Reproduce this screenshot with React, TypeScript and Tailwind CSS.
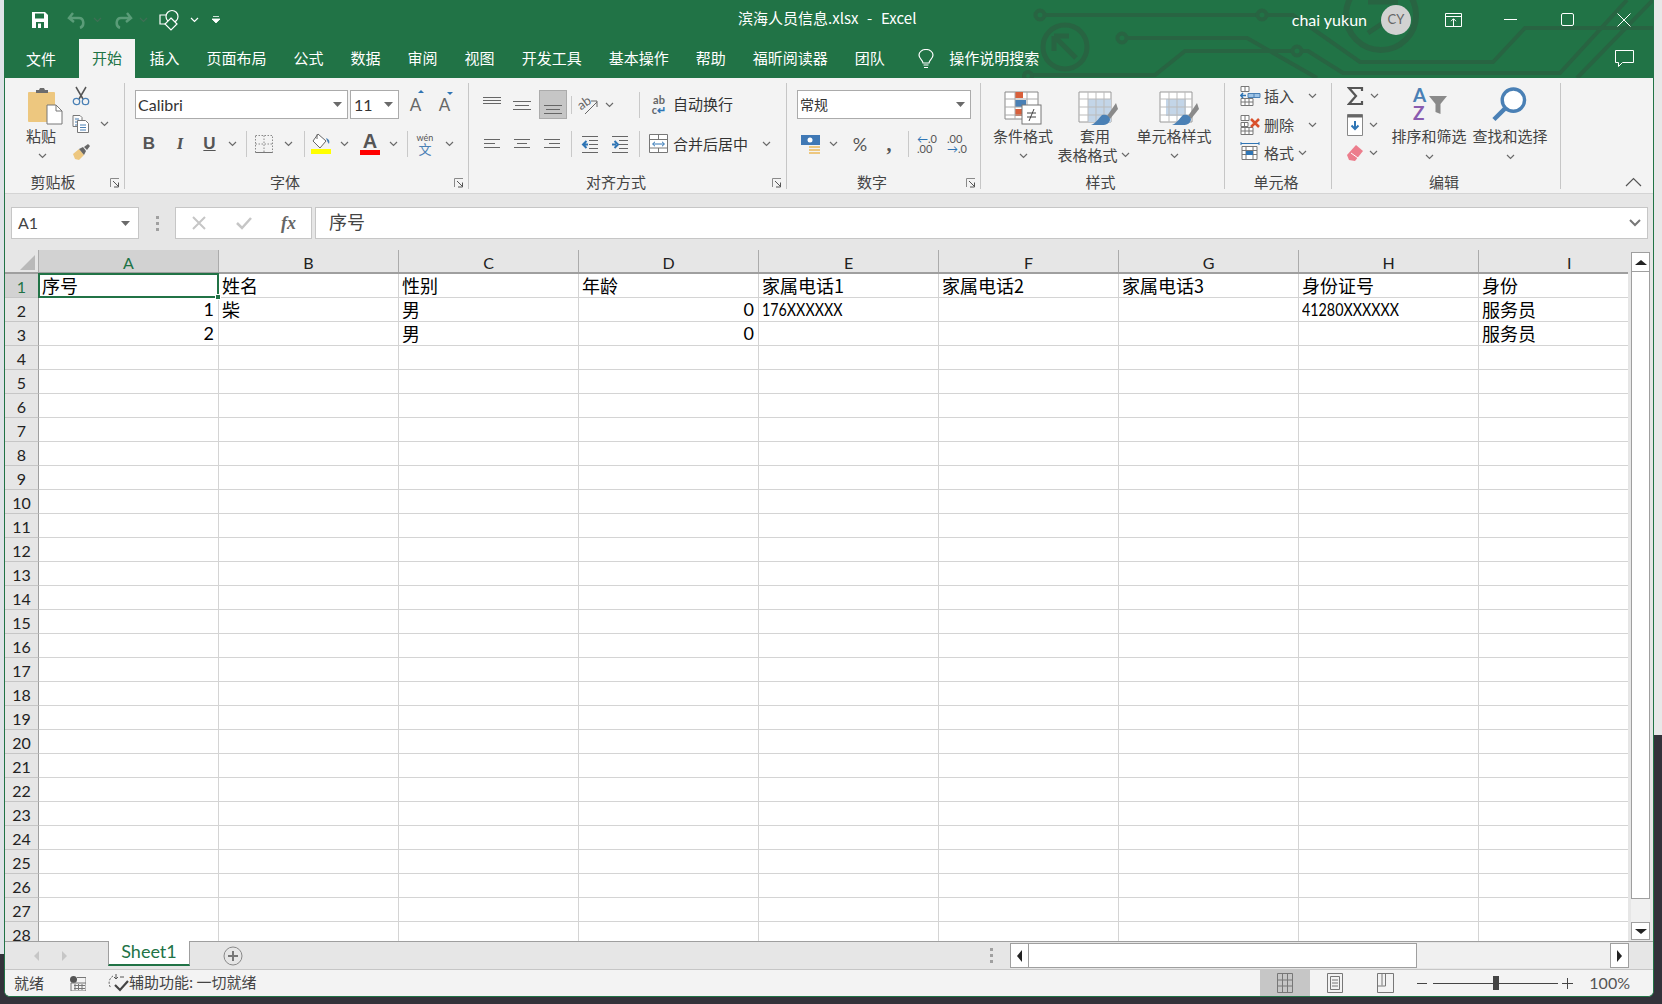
import type { ReactNode } from 'react';

const cjk = "font-['Microsoft_YaHei','Noto_Sans_CJK_SC',sans-serif]";

const Chevron = ({ className = '' }: { className?: string }) => (
  <svg width="9" height="6" viewBox="0 0 9 6" className={className}>
    <path d="M1 1l3.5 3.5L8 1" fill="none" stroke="#6a6a6a" strokeWidth="1.2" />
  </svg>
);

const Caret = () => (
  <svg width="9" height="5" viewBox="0 0 9 5">
    <path d="M0 0h9L4.5 5z" fill="#6a6a6a" />
  </svg>
);

const Launcher = () => (
  <svg width="10" height="10" viewBox="0 0 10 10">
    <path d="M.5 9V.5H9" fill="none" stroke="#8a8a8a" />
    <path d="M3 3l5 5M8.500 4.500v4.500H4" fill="none" stroke="#555" />
  </svg>
);

const Sep = ({ h = 'h-[26px]' }: { h?: string }) => <div className={`w-px bg-[#c9c9c9] ${h}`} />;

const Cell = ({ w, children, className = '' }: { w: number; children?: ReactNode; className?: string }) => (
  <div className={`flex items-center justify-center shrink-0 ${className}`} style={{ width: w }}>
    {children}
  </div>
);

const Lines = ({ ys, x1s, x2s }: { ys: number[]; x1s: number[]; x2s: number[] }) => (
  <svg width="20" height="20" viewBox="0 0 20 20">
    {ys.map((y, i) => (
      <path key={y} d={`M${x1s[i]} ${y + 0.5}H${x2s[i]}`} stroke="#666" />
    ))}
  </svg>
);

const Group = ({
  w,
  label,
  launcher,
  children,
}: {
  w: number;
  label: string;
  launcher?: boolean;
  children: ReactNode;
}) => (
  <div className="relative flex flex-col shrink-0 h-[106px] mt-[5px] border-r border-[#c6c6c6]" style={{ width: w }}>
    <div className="flex-1 min-h-0">{children}</div>
    <div className={`h-[17px] leading-[20px] text-center text-[15px] text-[#444] ${launcher ? 'pr-[23px]' : 'pr-[4px]'}`}>
      {label}
    </div>
    {launcher && (
      <div className="absolute right-[4px] bottom-[1px] flex">
        <Launcher />
      </div>
    )}
  </div>
);

const tabs = ['插入', '页面布局', '公式', '数据', '审阅', '视图', '开发工具', '基本操作', '帮助', '福昕阅读器', '团队'];

const PasteIcon = () => (
  <svg width="36" height="38" viewBox="0 0 36 38">
    <rect x="1" y="5" width="27" height="30" rx="1" fill="#edc77f" />
    <path d="M9 6V3h3l1-2h4l1 2h3v3z" fill="#6c6c6c" />
    <path d="M20 18h9l6 6v13H20z" fill="#fff" stroke="#777" />
    <path d="M29 18v6h6" fill="none" stroke="#777" />
  </svg>
);

const CutIcon = () => (
  <svg width="18" height="20" viewBox="0 0 18 20">
    <path d="M4 1l7 12M14 1L7 13" stroke="#555" strokeWidth="1.5" fill="none" />
    <circle cx="4.500" cy="15.500" r="3.200" fill="none" stroke="#4a80b5" strokeWidth="1.300" />
    <circle cx="13.500" cy="15.500" r="3.200" fill="none" stroke="#4a80b5" strokeWidth="1.300" />
  </svg>
);

const CopyIcon = () => (
  <svg width="18" height="18" viewBox="0 0 18 18">
    <path d="M1 .5h7l2 2v3M1 .5v11h4" fill="#fff" stroke="#777" />
    <path d="M5.500 5.500h8l3 3v9h-11z" fill="#fff" stroke="#777" />
    <path d="M3 4h4M3 7h2M3 10h2M8 10h6M8 12.500h6M8 15h6" stroke="#4a80b5" />
  </svg>
);

const PainterIcon = () => (
  <svg width="19" height="17" viewBox="0 0 19 17">
    <path d="M1 10l6-5 5 6-5 5-4-1z" fill="#edc77f" />
    <path d="M7 5l4-2 3 4-2 4z" fill="#666" />
    <path d="M12 3l4-3 2 2-3 4z" fill="#666" />
  </svg>
);

const BordersIcon = () => (
  <svg width="18" height="18" viewBox="0 0 18 18">
    <path d="M.5.500h17v17H.5zM9 .500v17M.5 9h17" fill="none" stroke="#8a8a8a" strokeDasharray="1.500 1.500" />
    <path d="M.5 17.500h17" stroke="#777" />
  </svg>
);

const FillIcon = () => (
  <svg width="22" height="22" viewBox="0 0 22 22">
    <path d="M8 1l8 7-6 7-7-7z" fill="#fff" stroke="#666" />
    <path d="M7 1.500V6" stroke="#666" />
    <path d="M16 5c3 1 4 3 3 6-1-1-2-3-3-6z" fill="#4a80b5" />
    <rect x="1" y="16" width="20" height="5" fill="#ffff00" />
  </svg>
);

const FontColorIcon = () => (
  <div className="flex flex-col items-center w-[20px]">
    <span className="text-[20px] leading-[17px] font-bold text-[#555] font-['Liberation_Sans']">A</span>
    <div className="w-[20px] h-[5px] bg-[#ff0000]" />
  </div>
);

const WenIcon = () => (
  <div className="flex flex-col items-center leading-none w-[18px]">
    <span className="text-[9px] text-[#555] font-['Lato'] leading-[9px]">wén</span>
    <span className="text-[13px] text-[#4a80b5] leading-[13px]">文</span>
  </div>
);

const IndentIcon = ({ right }: { right?: boolean }) => (
  <svg width="18" height="18" viewBox="0 0 18 18">
    <path d="M1 1.500h16M8 5.500h9M8 9.500h9M8 13.500h9M1 17.500h16" stroke="#666" />
    {right ? (
      <path d="M1 9.500h4M3.500 6l3.500 3.500-3.500 3.500" stroke="#2f75b5" strokeWidth="2" fill="none" />
    ) : (
      <path d="M7 9.500H2.500M5.500 6L2 9.500 5.500 13" stroke="#2f75b5" strokeWidth="2" fill="none" />
    )}
  </svg>
);

const CondIcon = () => (
  <svg width="38" height="34" viewBox="0 0 38 34">
    <path d="M1 1h33v27H1z" fill="#fff" stroke="#888" />
    <rect x="11" y="1" width="8" height="6" fill="#d9603b" />
    <rect x="11" y="9" width="11" height="7" fill="#4a80b5" />
    <rect x="11" y="18" width="9" height="7" fill="#d9603b" />
    <path d="M1 8h33M1 16h33M1 24h18M11 1v27M23 1v27" fill="none" stroke="#aaa" />
    <rect x="18" y="14" width="19" height="19" fill="#fff" stroke="#777" />
    <path d="M23 22h9M23 26h9M30 18l-5 12" stroke="#444" fill="none" />
  </svg>
);

const TableIcon = ({ full }: { full?: boolean }) => (
  <svg width="40" height="36" viewBox="0 0 40 36">
    <path d="M1 1h32v30H1z" fill="#fff" stroke="#999" />
    {full ? (
      <rect x="7" y="8" width="20" height="17" fill="#c3d5e8" />
    ) : (
      <rect x="10" y="8" width="23" height="23" fill="#c3d5e8" />
    )}
    <path d="M1 8h32M1 16h32M1 24h32M10 1v30M18 1v30M26 1v30" fill="none" stroke="#bbb" />
    <path d="M38 12l-9 13 3 3 8-10z" fill="#8a8a8a" />
    <path d="M24 24c4-1 8 1 8 5-1 3-3 5-8 5H13c5-2 7-6 11-10z" fill="#4a80b5" />
  </svg>
);

const CellsIcon = ({ kind }: { kind: 'ins' | 'del' | 'fmt' }) => (
  <svg width="22" height="22" viewBox="0 0 22 22">
    {kind === 'fmt' ? (
      <g>
        <path d="M1 1.500h18M1 0v3M19 0v3" stroke="#2f75b5" />
        <path d="M2 4.500h15v13H2zM2 8.500h15M2 12.500h15M6 4.500v13M13 4.500v13" fill="#fff" stroke="#777" />
        <rect x="6" y="9" width="7" height="4" fill="#2f75b5" />
      </g>
    ) : (
      <g>
        <path d="M1 1.500h8v5H1zM5 1.500v5M1 13.500h12v7H1zM1 17h12M5 13.500v7M9 13.500v7" fill="#fff" stroke="#777" />
        {kind === 'ins' ? (
          <g>
            <path d="M8 8.500h12v4H8zM14 8.500v4" fill="#9dc3e6" stroke="#4a80b5" />
            <path d="M6 10.500H1M3 8L.8 10.500 3 13" stroke="#2f75b5" strokeWidth="1.500" fill="none" />
          </g>
        ) : (
          <g>
            <path d="M1 8.500h7v4H1zM4.500 8.500v4" fill="#fff" stroke="#777" />
            <path d="M11 5l8 8M19 5l-8 8" stroke="#d9512c" strokeWidth="2.500" />
          </g>
        )}
      </g>
    )}
  </svg>
);

const FunnelIcon = () => (
  <svg width="18" height="18" viewBox="0 0 18 18">
    <path d="M0 0h18l-6.500 8v10l-5-2V8z" fill="#8a8a8a" />
  </svg>
);

const FindIcon = () => (
  <svg width="35" height="36" viewBox="0 0 36 36">
    <circle cx="22" cy="14" r="11.500" fill="#fff" stroke="#4a80b5" strokeWidth="3.500" />
    <path d="M13 23L2 34" stroke="#4a80b5" strokeWidth="4.500" />
  </svg>
);

const headers = ['A', 'B', 'C', 'D', 'E', 'F', 'G', 'H', 'I'];

const rowsData: Record<number, { text: string; right?: boolean; en?: boolean }[]> = {
  1: [
    { text: '序号' },
    { text: '姓名' },
    { text: '性别' },
    { text: '年龄' },
    { text: '家属电话1' },
    { text: '家属电话2' },
    { text: '家属电话3' },
    { text: '身份证号' },
    { text: '身份' },
  ],
  2: [
    { text: '1', right: true },
    { text: '柴' },
    { text: '男' },
    { text: '0', right: true },
    { text: '176XXXXXX', en: true },
    { text: '' },
    { text: '' },
    { text: '41280XXXXXX', en: true },
    { text: '服务员' },
  ],
  3: [
    { text: '2', right: true },
    { text: '' },
    { text: '男' },
    { text: '0', right: true },
    { text: '' },
    { text: '' },
    { text: '' },
    { text: '' },
    { text: '服务员' },
  ],
};

const rowNums = Array.from({ length: 28 }, (_, i) => i + 1);

const Circuit = () => (
  <svg
    className="absolute left-0 top-0 pointer-events-none"
    width="1650"
    height="78"
    viewBox="5 0 1650 78"
    fill="none"
    stroke="#286442"
    strokeWidth="4"
  >
    <circle cx="1040" cy="15" r="4.500" />
    <path d="M1045 15h212" />
    <circle cx="1262" cy="15" r="4.500" />
    <path d="M1267 15h26l67 47h133l32-34h130" />
    <circle cx="1122" cy="38" r="4.500" />
    <path d="M1127 38h120l70 40" />
    <path d="M1030 75h125l30-24h107" />
    <circle cx="1297" cy="51" r="4.500" />
    <path d="M1302 51h6l35 22h217l67-73" />
    <path d="M1577 78l76-78" />
    <circle cx="1065" cy="47" r="22" strokeWidth="5" />
    <path d="M1054 36h15M1054 36v15M1056 38l20 20" strokeWidth="5" />
    <circle cx="1381" cy="15" r="35" strokeWidth="6" />
    <path d="M1368 2h30M1395 15l-27 18" strokeWidth="5" />
    <circle cx="1028" cy="76" r="4" />
  </svg>
);

export default function App() {
  return (
    <div className={`relative w-[1662px] h-[1004px] overflow-hidden bg-[#33323a] flex ${cjk} text-[#333]`}>
      {/* desktop showing at the edges */}
      <div className="w-[4px] h-[954px] bg-[#dfe3e8] shrink-0" />
      <div className="w-[1650px] h-[997px] shrink-0 flex flex-col bg-[#f3f3f3] border-x border-b border-[#217346] rounded-bl-[6px] rounded-br-[6px] overflow-hidden">
        {/* title + tabs */}
        <div className="relative h-[78px] shrink-0 bg-[#217346] text-white">
          <Circuit />
          <div className="relative h-[39px] flex items-center">
            <div className="ml-[25px] flex items-center">
              <Cell w={20}>
                <svg width="16" height="16" viewBox="0 0 16 16">
                  <path d="M0 0h13l3 3v13H0z" fill="#fff" />
                  <path d="M3 1.500h9v5H3z" fill="#217346" />
                  <path d="M4 10h8v6H4z" fill="#217346" />
                  <path d="M6 11.500h3V16H6z" fill="#fff" />
                </svg>
              </Cell>
              <Cell w={23} className="ml-[15px]">
                <svg width="20" height="18" viewBox="0 0 20 18">
                  <path d="M6 2L2 7l5 4M2 7h10c5 0 6 8 1 10" fill="none" stroke="#5a9c78" strokeWidth="2.500" />
                </svg>
              </Cell>
              <Cell w={12} className="ml-[3px]">
                <Chevron className="opacity-40" />
              </Cell>
              <Cell w={23} className="ml-[8px]">
                <svg width="20" height="18" viewBox="0 0 20 18">
                  <path d="M14 2l4 5-5 4M18 7H8c-5 0-6 8-1 10" fill="none" stroke="#5a9c78" strokeWidth="2.500" />
                </svg>
              </Cell>
              <Cell w={12} className="ml-[3px]">
                <Chevron className="opacity-40" />
              </Cell>
              <Cell w={24} className="ml-[9px]">
                <svg width="22" height="22" viewBox="0 0 22 22">
                  <path d="M1 6h10v9H1z" fill="none" stroke="#fff" strokeWidth="1.200" />
                  <circle cx="13" cy="7.500" r="6" fill="#217346" stroke="#fff" strokeWidth="1.200" />
                  <path d="M12 9l6 6-6 6-6-6z" fill="#217346" stroke="#fff" strokeWidth="1.200" />
                </svg>
              </Cell>
              <Cell w={12} className="ml-[6px]">
                <svg width="9" height="6" viewBox="0 0 9 6">
                  <path d="M1 1l3.500 3.500L8 1" fill="none" stroke="#fff" strokeWidth="1.200" />
                </svg>
              </Cell>
              <Cell w={10} className="ml-[11px]">
                <svg width="8" height="8" viewBox="0 0 8 8">
                  <path d="M1 .5h6M0 3h8L4 7z" fill="#fff" stroke="#fff" strokeWidth=".8" />
                </svg>
              </Cell>
            </div>
            <div className="absolute left-[733px] top-[8px] text-[15px] leading-[20px] whitespace-pre [word-spacing:1px]">
              滨海人员信息.xlsx  -  Excel
            </div>
            <div className="ml-auto flex items-center mr-[22px]">
              <span className="font-['Lato'] text-[16px] mr-[14px]">chai yukun</span>
              <div className="w-[30px] h-[30px] rounded-full bg-[#d2d2d2] text-[#666] flex items-center justify-center text-[13px] font-['Lato']">
                CY
              </div>
              <Cell w={22} className="ml-[31px]">
                <svg width="17" height="14" viewBox="0 0 17 14">
                  <path d="M.5.5h16v13H.5zM.5 3.500h16M8.500 13V6M6 8.200l2.500-2.500L11 8.200" fill="none" stroke="#fff" />
                </svg>
              </Cell>
              <Cell w={14} className="ml-[39px]">
                <div className="w-[13px] h-px bg-white" />
              </Cell>
              <Cell w={14} className="ml-[43px]">
                <div className="w-[13px] h-[13px] rounded-[2px] border border-white" />
              </Cell>
              <Cell w={14} className="ml-[43px]">
                <svg width="14" height="14" viewBox="0 0 14 14">
                  <path d="M.5.5l13 13M13.500.5l-13 13" stroke="#fff" />
                </svg>
              </Cell>
            </div>
          </div>
          <div className="relative h-[39px] flex items-stretch text-[15px] pl-[7px]">
            <div className="px-[14px] flex items-center mr-[9px] mt-px">文件</div>
            <div className="px-[13px] flex items-center bg-[#f3f3f3] text-[#217346] mr-px">开始</div>
            {tabs.map((t) => (
              <div key={t} className="px-[13.500px] flex items-center">
                {t}
              </div>
            ))}
            <div className="flex items-center ml-[20px]">
              <svg width="16" height="20" viewBox="0 0 16 20">
                <path
                  d="M5 14c0-3-4-4-4-8a7 5.500 0 0114 0c0 4-4 5-4 8zM5.500 16h5M6 18.500h4"
                  fill="none"
                  stroke="#fff"
                  strokeWidth="1.200"
                />
              </svg>
              <span className="ml-[15px]">操作说明搜索</span>
            </div>
            <div className="ml-auto mr-[19px] flex items-center">
              <svg width="19" height="18" viewBox="0 0 19 18">
                <path d="M.5.5h18v12H7.500l-4 4v-4h-3z" fill="none" stroke="#fff" />
              </svg>
            </div>
          </div>
        </div>

        {/* ribbon */}
        <div className="relative h-[116px] shrink-0 flex items-start bg-[#f3f3f3] border-b border-[#d4d4d4] text-[15px] text-[#444]">
          <Group w={120} label="剪贴板" launcher>
            <div className="flex">
              <div className="w-[67px] pl-[22px] pt-[4px] flex flex-col items-start">
                <PasteIcon />
                <span className="leading-[22px] w-[28px] whitespace-nowrap flex justify-center">粘贴</span>
                <Chevron className="mt-[6px] ml-[11px]" />
              </div>
              <div className="flex flex-col pt-[3px]">
                <div className="h-[23px]">
                  <CutIcon />
                </div>
                <div className="h-[30px] flex items-center">
                  <CopyIcon />
                  <Chevron className="ml-[10px]" />
                </div>
                <div className="h-[26px] flex items-center">
                  <PainterIcon />
                </div>
              </div>
            </div>
          </Group>
          <Group w={344} label="字体" launcher>
            <div className="pl-[10px] pt-[7px] flex items-center">
              <div className="w-[213px] h-[29px] bg-white border border-[#ababab] flex items-center pl-[2px] pr-[5px] text-[16px] text-[#333] font-['Lato'] justify-between">
                Calibri
                <Caret />
              </div>
              <div className="ml-[2px] w-[49px] h-[29px] bg-white border border-[#ababab] flex items-center pl-[3px] pr-[5px] text-[16px] text-[#333] font-['Lato'] justify-between">
                11
                <Caret />
              </div>
              <Cell w={29} className="ml-[2px] font-['Lato'] text-[17px] text-[#666]">
                <span className="relative">
                  A
                  <span className="absolute -right-[3px] -top-[2px] border-x-[3px] border-x-transparent border-b-[3px] border-b-[#2f75b5]" />
                </span>
              </Cell>
              <Cell w={29} className="font-['Lato'] text-[17px] text-[#666]">
                <span className="relative">
                  A
                  <span className="absolute -right-[3px] top-0 border-x-[3px] border-x-transparent border-t-[3px] border-t-[#2f75b5]" />
                </span>
              </Cell>
            </div>
            <div className="pl-[9px] mt-[12px] flex items-center h-[26px] font-['Liberation_Sans'] text-[#555] text-[17px]">
              <Cell w={30} className="font-bold">
                B
              </Cell>
              <Cell w={32} className="italic font-serif font-bold">
                I
              </Cell>
              <Cell w={27} className="underline font-bold">
                U
              </Cell>
              <Cell w={18}>
                <Chevron />
              </Cell>
              <Cell w={10}>
                <Sep />
              </Cell>
              <Cell w={26}>
                <BordersIcon />
              </Cell>
              <Cell w={22}>
                <Chevron />
              </Cell>
              <Cell w={10}>
                <Sep />
              </Cell>
              <Cell w={24}>
                <FillIcon />
              </Cell>
              <Cell w={22}>
                <Chevron />
              </Cell>
              <Cell w={30}>
                <FontColorIcon />
              </Cell>
              <Cell w={16}>
                <Chevron />
              </Cell>
              <Cell w={12}>
                <Sep />
              </Cell>
              <Cell w={24} className={`${cjk}`}>
                <WenIcon />
              </Cell>
              <Cell w={24}>
                <Chevron />
              </Cell>
            </div>
          </Group>
          <Group w={318} label="对齐方式" launcher>
            <div className="pl-[8px] pt-[7px] flex items-center h-[36px]">
              <Cell w={30}>
                <Lines ys={[2, 5, 8]} x1s={[1, 1, 1]} x2s={[19, 19, 19]} />
              </Cell>
              <Cell w={30}>
                <Lines ys={[6, 10, 14]} x1s={[1, 3, 1]} x2s={[19, 17, 19]} />
              </Cell>
              <Cell w={28} className="ml-[2px] h-[29px] bg-[#c6c6c6] border border-[#ababab]">
                <Lines ys={[10, 14, 18]} x1s={[1, 3, 1]} x2s={[19, 17, 19]} />
              </Cell>
              <Cell w={8}>
                <Sep h="h-[18px]" />
              </Cell>
              <Cell w={26}>
                <svg width="22" height="22" viewBox="0 0 22 22" className="overflow-visible">
                  <text x="1" y="13" transform="rotate(-35 8 10)" fontSize="13" fill="#666" fontFamily="Lato">
                    ab
                  </text>
                  <path d="M8 20L20 8M14 7h6v6" fill="none" stroke="#666" />
                </svg>
              </Cell>
              <Cell w={16}>
                <Chevron />
              </Cell>
              <Cell w={8} className="ml-[18px]">
                <Sep />
              </Cell>
              <Cell w={22} className="ml-[5px] font-['Lato'] text-[11px] font-bold leading-[10px] text-[#666]">
                <span className="text-center">
                  ab
                  <br />c<span className="text-[#2f75b5]">↵</span>
                </span>
              </Cell>
              <span className="ml-[3px] text-[#333]">自动换行</span>
            </div>
            <div className="pl-[8px] mt-[12px] flex items-center h-[26px]">
              <Cell w={30}>
                <Lines ys={[5, 9, 13]} x1s={[2, 2, 2]} x2s={[18, 13, 18]} />
              </Cell>
              <Cell w={30}>
                <Lines ys={[5, 9, 13]} x1s={[2, 5, 2]} x2s={[18, 15, 18]} />
              </Cell>
              <Cell w={30}>
                <Lines ys={[5, 9, 13]} x1s={[2, 7, 2]} x2s={[18, 18, 18]} />
              </Cell>
              <Cell w={8}>
                <Sep />
              </Cell>
              <Cell w={30}>
                <IndentIcon />
              </Cell>
              <Cell w={30}>
                <IndentIcon right />
              </Cell>
              <Cell w={8}>
                <Sep />
              </Cell>
              <Cell w={20} className="ml-[6px]">
                <svg width="20" height="20" viewBox="0 0 20 20">
                  <path d="M.5.500h18v18H.5zM.5 5.500h18M.5 14h18M9.500.5v5M9.500 14v4" fill="#fff" stroke="#777" />
                  <path d="M4 10h11M6 7.800L3.500 10 6 12.200M13 7.800l2.500 2.200-2.500 2.200" fill="none" stroke="#2f75b5" />
                </svg>
              </Cell>
              <span className="ml-[4px] text-[#333]">合并后居中</span>
              <Chevron className="ml-[14px]" />
            </div>
          </Group>
          <Group w={194} label="数字" launcher>
            <div className="pl-[10px] pt-[7px]">
              <div className="w-[174px] h-[29px] bg-white border border-[#ababab] flex items-center pl-[2px] pr-[5px] justify-between text-[14px] text-[#333]">
                常规
                <Caret />
              </div>
            </div>
            <div className="pl-[12px] mt-[12px] flex items-center h-[26px] text-[#555]">
              <Cell w={24}>
                <svg width="20" height="20" viewBox="0 0 20 20">
                  <rect x="0" y="1" width="19" height="10" fill="#3f78b5" />
                  <circle cx="9" cy="6" r="2.500" fill="#fff" />
                  <path d="M8 12h11v2H8zM8 15h11v2H8zM8 18h11v2H8z" fill="#edc77f" />
                </svg>
              </Cell>
              <Cell w={20}>
                <Chevron />
              </Cell>
              <Cell w={34} className="font-['Lato'] text-[18px]">
                %
              </Cell>
              <Cell w={24} className="font-['Liberation_Serif'] font-bold text-[20px] leading-[18px]">
                ,
              </Cell>
              <Cell w={14}>
                <Sep />
              </Cell>
              <Cell w={24} className="font-['Lato'] text-[11px] leading-[10px] text-[#555]">
                <span>
                  <span className="text-[#2f75b5]">←</span>.0
                  <br />
                  .00
                </span>
              </Cell>
              <Cell w={36} className="font-['Lato'] text-[11px] leading-[10px] text-[#555]">
                <span>
                  .00
                  <br />
                  <span className="text-[#2f75b5]">→</span>.0
                </span>
              </Cell>
            </div>
          </Group>
          <Group w={244} label="样式">
            <div className="flex pt-[8px] pl-[8px] text-[15px]">
              <div className="w-[68px] flex flex-col items-center">
                <CondIcon />
                <span className="leading-[20px] mt-[1px]">条件格式</span>
                <Chevron className="mt-[7px]" />
              </div>
              <div className="w-[76px] flex flex-col items-center">
                <div className="ml-[6px] h-[36px]">
                  <TableIcon />
                </div>
                <span className="leading-[20px] -mt-[1px]">套用</span>
                <span className="leading-[20px] -mt-[1px] mr-[3px] flex items-center whitespace-nowrap">
                  表格格式
                  <Chevron className="ml-[3px]" />
                </span>
              </div>
              <div className="w-[78px] ml-[2px] flex flex-col items-center">
                <div className="ml-[10px] h-[36px]">
                  <TableIcon full />
                </div>
                <span className="leading-[20px] -mt-[1px] whitespace-nowrap">单元格样式</span>
                <Chevron className="mt-[7px]" />
              </div>
            </div>
          </Group>
          <Group w={107} label="单元格">
            <div className="pl-[15px] -mt-[1px] flex flex-col">
              <div className="h-[28.500px] flex items-center">
                <CellsIcon kind="ins" />
                <span className="ml-[2px]">插入</span>
                <Chevron className="ml-[14px]" />
              </div>
              <div className="h-[28.500px] flex items-center">
                <CellsIcon kind="del" />
                <span className="ml-[2px]">删除</span>
                <Chevron className="ml-[14px]" />
              </div>
              <div className="h-[28.500px] flex items-center">
                <CellsIcon kind="fmt" />
                <span className="ml-[2px]">格式</span>
                <Chevron className="ml-[4px]" />
              </div>
            </div>
          </Group>
          <Group w={229} label="编辑">
            <div className="flex text-[15px]">
              <div className="w-[60px] pl-[15px] -mt-[1px] flex flex-col">
                <div className="h-[28.500px] flex items-center">
                  <svg width="17" height="18" viewBox="0 0 17 18">
                    <path d="M15 4V1H2l7 8-7 8h13v-3" fill="none" stroke="#555" strokeWidth="2.200" />
                  </svg>
                  <Chevron className="ml-[6px]" />
                </div>
                <div className="h-[28.500px] flex items-center">
                  <svg width="17" height="22" viewBox="0 0 17 22">
                    <path d="M.5.5h15v21H.5z" fill="#fff" stroke="#888" />
                    <path d="M.5.5h15v3H.5z" fill="#666" />
                    <path d="M8 7v8M4.500 11.500L8 15l3.500-3.500" stroke="#2f75b5" strokeWidth="2" fill="none" />
                  </svg>
                  <Chevron className="ml-[5px]" />
                </div>
                <div className="h-[28.500px] flex items-center">
                  <svg width="17" height="18" viewBox="0 0 17 18">
                    <path d="M9 1l7 6-8 10-6-1-2-5z" fill="#ec7d8c" />
                    <path d="M4 9l7 5" stroke="#fff" />
                  </svg>
                  <Chevron className="ml-[5px]" />
                </div>
              </div>
              <div className="w-[76px] -ml-[1px] pt-[3px] flex flex-col items-center">
                <div className="h-[39px] w-[60px] flex ml-[4px]">
                  <div className="ml-[12px] w-[16px] flex flex-col text-[19px] leading-[18px] font-['Lato'] font-bold">
                    <span className="text-[#4a80b5]">A</span>
                    <span className="text-[#8a5cb0]">Z</span>
                  </div>
                  <div className="mt-[10px]">
                    <FunnelIcon />
                  </div>
                </div>
                <span className="leading-[20px] whitespace-nowrap mt-[1px]">排序和筛选</span>
                <Chevron className="mt-[8px]" />
              </div>
              <div className="w-[76px] ml-[5px] pt-[3px] flex flex-col items-center">
                <div className="h-[39px] -ml-[2px]">
                  <FindIcon />
                </div>
                <span className="leading-[20px] whitespace-nowrap mt-[1px]">查找和选择</span>
                <Chevron className="mt-[8px]" />
              </div>
            </div>
          </Group>
          <div className="ml-auto mr-[11px] self-end mb-[6px] flex">
            <svg width="17" height="10" viewBox="0 0 17 10">
              <path d="M1 9l7.500-7.500L16 9" fill="none" stroke="#555" strokeWidth="1.200" />
            </svg>
          </div>
        </div>

        {/* formula bar */}
        <div className="h-[56px] shrink-0 bg-[#e6e6e6] flex items-start pt-[13px] pl-[6px] pr-[5px]">
          <div className="w-[128px] h-[32px] bg-white border border-[#c6c6c6] flex items-center justify-between pl-[6px] pr-[8px] text-[16px] font-['Lato'] text-[#444]">
            A1
            <Caret />
          </div>
          <Cell w={36} className="h-[32px]">
            <div className="flex flex-col gap-[3px]">
              <div className="w-[3px] h-[3px] bg-[#a0a0a0]" />
              <div className="w-[3px] h-[3px] bg-[#a0a0a0]" />
              <div className="w-[3px] h-[3px] bg-[#a0a0a0]" />
            </div>
          </Cell>
          <div className="w-[137px] h-[32px] bg-white border border-[#c6c6c6] flex items-center">
            <Cell w={45}>
              <svg width="16" height="14" viewBox="0 0 16 14">
                <path d="M2 1l12 12M14 1L2 13" stroke="#c6c6c6" strokeWidth="2" />
              </svg>
            </Cell>
            <Cell w={45}>
              <svg width="18" height="14" viewBox="0 0 18 14">
                <path d="M2 7l5 5L16 2" fill="none" stroke="#c6c6c6" strokeWidth="2.500" />
              </svg>
            </Cell>
            <Cell w={45} className="font-['Liberation_Serif'] italic font-bold text-[18px] text-[#666]">
              fx
            </Cell>
          </div>
          <div className="ml-[3px] flex-1 h-[32px] bg-white border border-[#c6c6c6] flex items-center justify-between pl-[13px] pr-[6px] text-[18px] text-[#444]">
            <span className="-mt-[3px]">序号</span>
            <svg width="12" height="8" viewBox="0 0 12 8">
              <path d="M1 1l5 5 5-5" fill="none" stroke="#777" strokeWidth="2" />
            </svg>
          </div>
        </div>

        {/* sheet */}
        <div className="flex-1 min-h-0 flex bg-[#e6e6e6]">
          <div className="flex-1 min-w-0 flex flex-col overflow-hidden">
            <div className="h-[24px] shrink-0 flex border-b-2 border-[#9f9f9f] text-[16px] font-['Lato'] text-[#222]">
              <div className="w-[34px] shrink-0 flex items-end justify-end pr-[3px] pb-[2px] border-r border-[#ababab]">
                <div className="w-0 h-0 border-l-[15px] border-l-transparent border-b-[15px] border-b-[#b9b9b9]" />
              </div>
              {headers.map((h, i) => (
                <div
                  key={h}
                  className={`shrink-0 flex items-center pt-[3px] border-r ${
                    i === 8 ? 'w-[150px] justify-start pl-[88px] border-transparent' : 'w-[180px] justify-center border-[#ababab]'
                  } ${i === 0 ? 'bg-[#d2d2d2] text-[#217346]' : ''}`}
                >
                  {h}
                </div>
              ))}
            </div>
            <div className="flex-1 min-h-0">
              {rowNums.map((n) => (
                <div key={n} className="h-[24px] flex">
                  <div
                    className={`w-[34px] shrink-0 flex items-center justify-center pt-[2px] border-r border-b border-r-[#9f9f9f] border-b-[#c6c6c6] text-[16px] font-['Lato'] ${
                      n === 1 ? 'bg-[#d2d2d2] text-[#217346]' : 'text-[#222]'
                    }`}
                  >
                    {n}
                  </div>
                  {headers.map((h, i) => {
                    const c = rowsData[n]?.[i];
                    return (
                      <div
                        key={h}
                        className={`relative shrink-0 bg-white border-r border-b border-[#d4d4d4] px-[3px] flex items-center whitespace-nowrap text-[18px] text-black ${
                          i === 8 ? 'w-[150px] border-r-[#9f9f9f]' : 'w-[180px]'
                        } ${c?.right ? "justify-end font-['Lato'] text-[16px] pr-[4px]" : ''}`}
                      >
                        {c?.en ? (
                          <span className="inline-block origin-left scale-x-[0.84] font-['Lato'] text-[17px]">{c.text}</span>
                        ) : (
                          c?.text
                        )}
                        {n === 1 && i === 0 && (
                          <>
                            <div className="absolute z-10 -left-px -top-[1px] -right-px -bottom-px border-2 border-[#217346]" />
                            <div className="absolute z-10 -right-[3px] -bottom-[3px] w-[6px] h-[6px] bg-[#217346] border border-white" />
                          </>
                        )}
                      </div>
                    );
                  })}
                </div>
              ))}
            </div>
          </div>
          <div className="w-[25px] shrink-0 pl-[3px] pr-[3px] pt-[2px] flex flex-col h-[690px]">
            <div className="h-[20px] shrink-0 bg-white border border-[#9f9f9f] flex items-center justify-center">
              <div className="w-0 h-0 border-x-[6px] border-x-transparent border-b-[5px] border-b-[#222]" />
            </div>
            <div className="h-[627px] shrink-0 bg-white border-x border-b border-[#9f9f9f]" />
            <div className="flex-1 bg-[#f0f0f0]" />
            <div className="h-[18px] shrink-0 bg-white border border-[#9f9f9f] flex items-center justify-center">
              <div className="w-0 h-0 border-x-[6px] border-x-transparent border-t-[5px] border-t-[#222]" />
            </div>
          </div>
        </div>

        {/* sheet tabs */}
        <div className="h-[29px] shrink-0 flex bg-[#e6e6e6] border-t border-[#9f9f9f] border-b-[1px] border-b-[#c6c6c6]">
          <div className="w-[103px] flex items-center justify-center gap-[23px] pr-[12px]">
            <div className="w-0 h-0 border-y-[5px] border-y-transparent border-r-[5px] border-r-[#c6c6c6]" />
            <div className="w-0 h-0 border-y-[5px] border-y-transparent border-l-[5px] border-l-[#c6c6c6]" />
          </div>
          <div className="w-[82px] h-[25px] -mt-px bg-white border-x border-[#9f9f9f] border-b-2 border-b-[#217346] flex items-center justify-center pb-[2px] font-['Lato'] text-[18px] text-[#217346]">
            Sheet1
          </div>
          <div className="ml-[33px] flex items-center">
            <svg width="20" height="20" viewBox="0 0 20 20">
              <circle cx="10" cy="10" r="9" fill="none" stroke="#888" />
              <path d="M10 5v10M5 10h10" stroke="#777" strokeWidth="2" />
            </svg>
          </div>
          <div className="ml-auto flex items-center mr-[24px]">
            <div className="flex flex-col gap-[3px] mr-[17px]">
              <div className="w-[3px] h-[3px] bg-[#a0a0a0]" />
              <div className="w-[3px] h-[3px] bg-[#a0a0a0]" />
              <div className="w-[3px] h-[3px] bg-[#a0a0a0]" />
            </div>
            <div className="w-[619px] h-[25px] flex bg-[#f0f0f0]">
              <div className="w-[19px] bg-white border border-[#9f9f9f] flex items-center justify-center">
                <div className="w-0 h-0 border-y-[6px] border-y-transparent border-r-[5px] border-r-[#222]" />
              </div>
              <div className="w-[388px] bg-white border-y border-r border-[#9f9f9f]" />
              <div className="flex-1" />
              <div className="w-[19px] bg-white border border-[#9f9f9f] flex items-center justify-center">
                <div className="w-0 h-0 border-y-[6px] border-y-transparent border-l-[5px] border-l-[#222]" />
              </div>
            </div>
          </div>
        </div>

        {/* status bar */}
        <div className="h-[26px] shrink-0 flex items-stretch bg-[#f3f3f3] text-[15px] text-[#444] pl-[9px]">
          <span className="flex items-center w-[56px]">就绪</span>
          <div className="flex items-center w-[38px]">
            <svg width="16" height="15" viewBox="0 0 16 15">
              <circle cx="3.500" cy="3.500" r="3.500" fill="#555" />
              <path d="M7 1.500h9V15H1V7h15M4 9.500h11M4 12.500h11M5 8v6M8.500 8v6M12 8v6" fill="none" stroke="#777" />
            </svg>
          </div>
          <div className="flex items-center">
            <svg width="21" height="20" viewBox="0 0 21 20">
              <path d="M5 3a8 8 0 00-2 12" fill="none" stroke="#555" strokeDasharray="2 1.500" />
              <path d="M8 1v5M6 4l2 2 2-2M12 4h4" fill="none" stroke="#555" />
              <path d="M7 12l5 5 8-9" fill="none" stroke="#444" strokeWidth="2.200" />
            </svg>
            <span className="-mt-px">辅助功能: 一切就绪</span>
          </div>
          <div className="ml-auto flex items-stretch mr-[23px]">
            <div className="w-[50px] bg-[#c6c6c6] flex items-center justify-center">
              <svg width="16" height="20" viewBox="0 0 16 20">
                <path d="M.5.5h15v19H.5zM.5 7h15M.5 13h15M5.500.5v19M10.500.5v19" fill="none" stroke="#777" />
              </svg>
            </div>
            <div className="w-[50px] flex items-center justify-center ml-0">
              <svg width="16" height="20" viewBox="0 0 16 20">
                <path d="M.5.5h15v19H.5z" fill="none" stroke="#777" />
                <path d="M3.500 3.500h9v13h-9zM5 7h6M5 10h6M5 13h6" fill="none" stroke="#777" />
              </svg>
            </div>
            <div className="w-[50px] flex items-center justify-center">
              <svg width="17" height="20" viewBox="0 0 17 20">
                <path d="M.5.500h16v19H.5zM.5 13h8V.5M5 .5v12" fill="none" stroke="#777" />
              </svg>
            </div>
            <div className="flex items-center text-[#555] ml-[7px]">
              <div className="w-[10px] h-px bg-[#444]" />
              <div className="relative w-[125px] h-px bg-[#444] ml-[6px] flex items-center">
                <div className="absolute left-[60px] w-[6px] h-[14px] bg-[#444]" />
              </div>
              <svg width="11" height="11" viewBox="0 0 11 11" className="ml-[4px]">
                <path d="M5.500 0v11M0 5.500h11" stroke="#444" />
              </svg>
              <span className="ml-[16px] font-['Lato'] text-[16px]">100%</span>
            </div>
          </div>
        </div>
      </div>
      {/* right strip */}
      <div className="w-[8px] h-[735px] bg-[#e8e8e8] shrink-0" />
    </div>
  );
}
